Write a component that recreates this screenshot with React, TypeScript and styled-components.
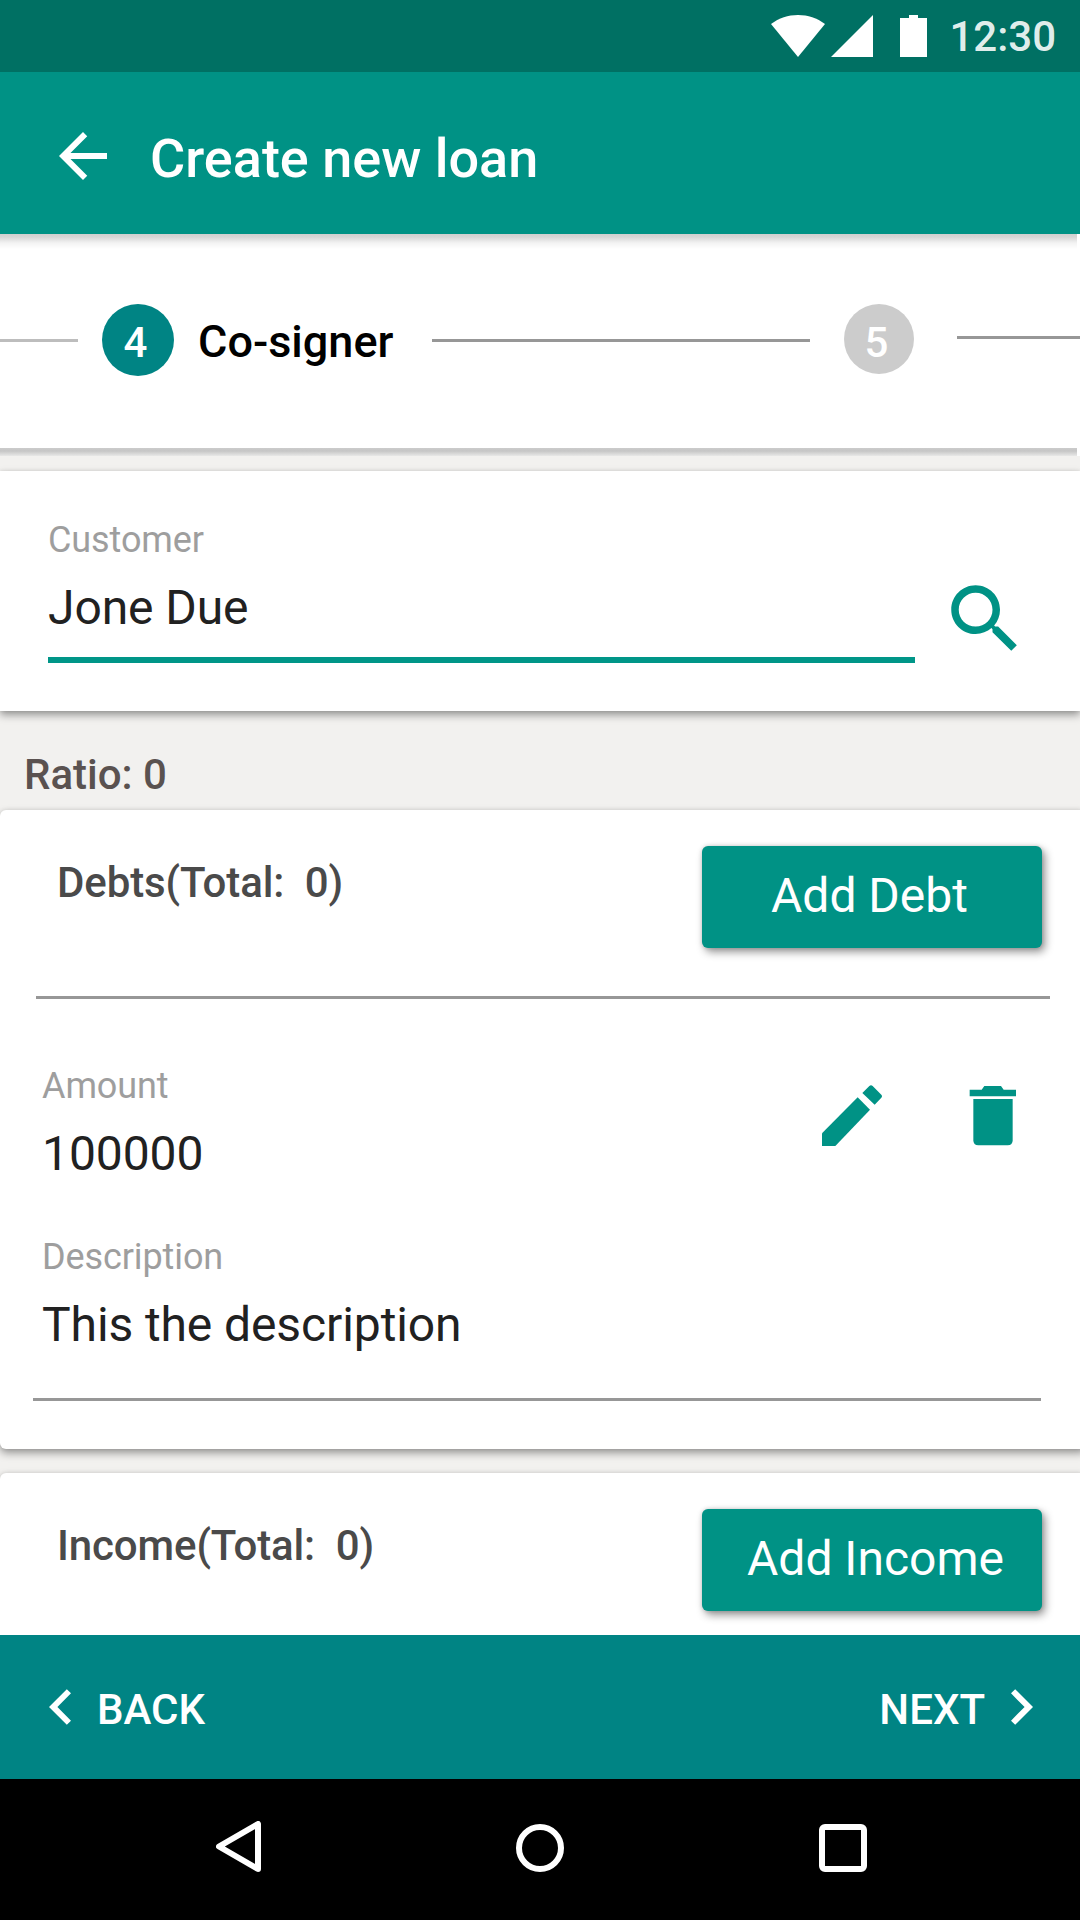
import React from "react";
import styled, { createGlobalStyle } from "styled-components";

const GlobalStyle = createGlobalStyle`
  * { box-sizing: border-box; }
  html, body { margin: 0; padding: 0; }
  body { font-family: Roboto, "Noto Sans", sans-serif; background: #f2f1ef; }
  button { font: inherit; border: 0; background: none; color: inherit; padding: 0; margin: 0; }
  svg { display: block; flex: none; }
`;

const TEAL = "#009285";
const DEEP = "#008484";

const Screen = styled.div`
  width: 1080px;
  height: 1920px;
  display: flex;
  flex-direction: column;
  overflow: hidden;
  background: #f2f1ef;
`;

const StatusBar = styled.div`
  height: 72px;
  flex: none;
  display: flex;
  justify-content: flex-end;
  padding: 15px 24px 0 0;
  background: #007063;
`;

const Clock = styled.span`
  margin: -2px 0 0 22px;
  font-size: 42px;
  line-height: 48px;
  font-weight: 500;
  color: rgba(255, 255, 255, 0.9);
`;

const AppBar = styled.header`
  height: 162px;
  flex: none;
  display: flex;
  align-items: flex-start;
  padding: 48px 0 0 47px;
  background: ${TEAL};
  color: #fff;
`;

const Title = styled.h1`
  margin: 7px 0 0 31px;
  font-size: 54px;
  line-height: 64px;
  font-weight: 500;
`;

const Stepper = styled.nav`
  height: 222px;
  flex: none;
  display: flex;
  align-items: flex-start;
  padding-top: 70px;
  background:
    linear-gradient(#cbcbcb, #c6c6c6 3px, #e8e8e7) 0 214px / 1077px 8px no-repeat,
    linear-gradient(#cfcfcf, #d6d6d6 3px, #f3f3f3 9px, #fff) 0 0 / 1077px 15px no-repeat,
    #fff;
`;

const StepLine = styled.span<{ $width: number; $left?: number; $top?: number; $color?: string }>`
  width: ${(p) => p.$width}px;
  height: 3px;
  flex: none;
  margin: ${(p) => p.$top ?? 35}px 0 0 ${(p) => p.$left ?? 0}px;
  background: ${(p) => p.$color ?? "#979797"};
`;

const StepBadge = styled.span<{ $size: number; $left: number; $color: string }>`
  width: ${(p) => p.$size}px;
  height: ${(p) => p.$size}px;
  flex: none;
  margin-left: ${(p) => p.$left}px;
  padding: 15px 5px 0 0;
  border-radius: 50%;
  background: ${(p) => p.$color};
  color: #fff;
  text-align: center;
  font-size: 42px;
  line-height: 48px;
  font-weight: 500;
`;

const StepName = styled.span`
  width: 196px;
  margin: 12px 0 0 24px;
  font-size: 45px;
  line-height: 52px;
  font-weight: 500;
  white-space: nowrap;
  color: #000;
`;

const Content = styled.main`
  flex: 1;
  min-height: 0;
  overflow: hidden;
  padding-top: 15px;
`;

const Card = styled.section<{ $rounded?: boolean }>`
  width: ${(p) => (p.$rounded ? 1086 : 1080)}px;
  border-radius: ${(p) => (p.$rounded ? 6 : 0)}px;
  background: #fff;
  box-shadow: 0 4px 8px rgba(0, 0, 0, 0.38), 0 0 4px rgba(0, 0, 0, 0.08);
`;

const CustomerCard = styled(Card)`
  height: 240px;
  display: flex;
  align-items: flex-start;
  padding: 48px 0 0 48px;
`;

const CustomerInput = styled.div`
  width: 867px;
  height: 144px;
  margin-right: 25px;
  border-bottom: 6px solid #009688;
`;

const SearchButton = styled.button`
  margin-top: 55px;
`;

const Label = styled.div`
  font-size: 36px;
  line-height: 42px;
  letter-spacing: -0.1px;
  color: #9e9e9e;
`;

const Value = styled.div`
  margin-top: 19px;
  font-size: 48px;
  line-height: 56px;
  letter-spacing: -0.1px;
  color: #212121;
`;

const Ratio = styled.div`
  height: 99px;
  padding: 40px 0 0 24px;
  font-size: 42px;
  line-height: 48px;
  font-weight: 500;
  color: #5a5250;
`;

const DebtCard = styled(Card)`
  height: 639px;
  margin-bottom: 24px;
`;

const CardHead = styled.div`
  height: 186px;
  display: flex;
  justify-content: space-between;
  align-items: flex-start;
  padding: 36px 44px 0 57px;
`;

const CardTitle = styled.h2`
  margin: 13px 0 0;
  font-size: 42px;
  line-height: 48px;
  font-weight: 500;
  letter-spacing: -0.12px;
  white-space: pre;
  color: #4a4a4a;
`;

const AddButton = styled.button<{ $indent: number }>`
  width: 340px;
  height: 102px;
  padding: 0 0 3px ${(p) => p.$indent}px;
  border-radius: 6px;
  background: ${TEAL};
  box-shadow: 3px 4px 9px rgba(0, 0, 0, 0.42), 0 0 4px rgba(0, 0, 0, 0.15);
  color: #fff;
  font-size: 48px;
  line-height: 56px;
  text-align: left;
  white-space: nowrap;
`;

const Rule = styled.hr<{ $left: number; $width: number }>`
  width: ${(p) => p.$width}px;
  height: 3px;
  margin: 0 0 0 ${(p) => p.$left}px;
  border: 0;
  background: #979797;
`;

const Entry = styled.div`
  height: 399px;
  display: flex;
  align-items: flex-start;
  padding: 66px 0 0 42px;
`;

const Fields = styled.div`
  width: 780px;
  display: flex;
  flex-direction: column;
  gap: 54px;
`;

const EntryActions = styled.div`
  display: flex;
  gap: 87px;
  padding-top: 20px;
`;

const BottomBar = styled.footer`
  height: 144px;
  flex: none;
  display: flex;
  justify-content: space-between;
  align-items: flex-start;
  padding: 54px 47px 0 49px;
  background: ${DEEP};
`;

const BarButton = styled.button`
  display: flex;
  align-items: flex-start;
  gap: 26px;
  color: #fff;
  font-size: 42px;
  line-height: 48px;
  font-weight: 500;

  span { margin-top: -3px; }
`;

const SystemNav = styled.div`
  height: 141px;
  flex: none;
  display: flex;
  align-items: flex-start;
  padding: 42px 213px 0 216px;
  justify-content: space-between;
  background: #000;
`;

const HomeKey = styled.span`
  width: 48px;
  height: 48px;
  margin-top: 3px;
  border: 6px solid #fff;
  border-radius: 50%;
`;

const RecentsKey = styled.span`
  width: 48px;
  height: 48px;
  margin-top: 3px;
  border: 6px solid #fff;
  border-radius: 6px;
`;

const StatusIcons = () => (
  <svg width="156" height="42" viewBox="0 0 156 42" fill="#fff">
    <path d="M0 9C8 3 17 0 27 0s19 3 27 9L27 42z" />
    <path d="M60 42L102 0v42z" />
    <path d="M138 0h9v3h9v39h-27V3h9z" />
  </svg>
);

const BackArrow = () => (
  <svg width="72" height="72" viewBox="0 0 24 24" fill="#fff">
    <path d="M20 11H7.83l5.59-5.59L12 4l-8 8 8 8 1.41-1.41L7.83 13H20v-2z" />
  </svg>
);

const SearchIcon = () => (
  <svg width="90" height="90" viewBox="0 0 24 24" fill={TEAL}>
    <path d="M15.5 14h-.79l-.28-.27C15.41 12.59 16 11.11 16 9.5 16 5.91 13.09 3 9.5 3S3 5.91 3 9.5 5.91 16 9.5 16c1.61 0 3.09-.59 4.23-1.57l.27.28v.79l5 4.99L20.49 19l-4.99-5zm-6 0C7.01 14 5 11.99 5 9.5S7.01 5 9.5 5 14 7.01 14 9.5 11.99 14 9.5 14z" />
  </svg>
);

const PencilIcon = () => (
  <svg width="60" height="61" viewBox="0 0 180 183" fill={TEAL}>
    <path d="M0 145L107 37l37 37L40 183H0z" />
    <path d="M121 24L142 3q5-5 10 0l26 26q4 5 0 9l-20 21z" />
  </svg>
);

const TrashIcon = () => (
  <svg width="48" height="61" viewBox="0 0 144 183" fill={TEAL}>
    <path d="M2 14h36l8-11h50l8 11h37v20H2z" />
    <path d="M13 42h118v124q0 15-15 15H28q-15 0-15-15z" />
  </svg>
);

const ChevronLeft = () => (
  <svg width="22" height="36" viewBox="0 0 7.41 12" fill="#fff">
    <path d="M7.41 1.41L6 0 0 6l6 6 1.41-1.41L2.83 6z" />
  </svg>
);

const ChevronRight = () => (
  <svg width="22" height="36" viewBox="0 0 7.41 12" fill="#fff">
    <path d="M0 1.41L1.41 0l6 6-6 6L0 10.59 4.58 6z" />
  </svg>
);

const BackKey = () => (
  <svg width="45" height="51" viewBox="0 0 45 51">
    <path d="M3 25.5L42 3v45z" fill="none" stroke="#fff" strokeWidth="6" strokeLinejoin="round" />
  </svg>
);

const Field = ({ label, value }: { label: string; value: string }) => (
  <div>
    <Label>{label}</Label>
    <Value>{value}</Value>
  </div>
);

export default function App() {
  return (
    <>
      <GlobalStyle />
      <Screen>
        <StatusBar>
          <StatusIcons />
          <Clock>12:30</Clock>
        </StatusBar>
        <AppBar>
          <BackArrow />
          <Title>Create new loan</Title>
        </AppBar>
        <Stepper>
          <StepLine $width={78} $color="#bdbdbd" />
          <StepBadge $size={72} $left={24} $color={DEEP}>4</StepBadge>
          <StepName>Co-signer</StepName>
          <StepLine $width={378} $left={38} />
          <StepBadge $size={70} $left={34} $color="#ccc">5</StepBadge>
          <StepLine $width={123} $left={43} $top={32} />
        </Stepper>
        <Content>
          <CustomerCard>
            <CustomerInput>
              <Field label="Customer" value="Jone Due" />
            </CustomerInput>
            <SearchButton aria-label="Search">
              <SearchIcon />
            </SearchButton>
          </CustomerCard>
          <Ratio>Ratio: 0</Ratio>
          <DebtCard $rounded>
            <CardHead>
              <CardTitle>{"Debts(Total:  0)"}</CardTitle>
              <AddButton $indent={69}>Add Debt</AddButton>
            </CardHead>
            <Rule $left={36} $width={1014} />
            <Entry>
              <Fields>
                <Field label="Amount" value="100000" />
                <Field label="Description" value="This the description" />
              </Fields>
              <EntryActions>
                <PencilIcon />
                <TrashIcon />
              </EntryActions>
            </Entry>
            <Rule $left={33} $width={1008} />
          </DebtCard>
          <Card $rounded>
            <CardHead>
              <CardTitle>{"Income(Total:  0)"}</CardTitle>
              <AddButton $indent={45}>Add Income</AddButton>
            </CardHead>
          </Card>
        </Content>
        <BottomBar>
          <BarButton>
            <ChevronLeft />
            <span>BACK</span>
          </BarButton>
          <BarButton>
            <span>NEXT</span>
            <ChevronRight />
          </BarButton>
        </BottomBar>
        <SystemNav>
          <BackKey />
          <HomeKey />
          <RecentsKey />
        </SystemNav>
      </Screen>
    </>
  );
}
